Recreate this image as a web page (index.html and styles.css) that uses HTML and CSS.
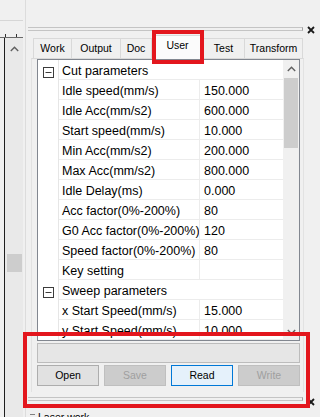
FILE: index.html
```html
<!DOCTYPE html>
<html>
<head>
<meta charset="utf-8">
<link rel="stylesheet" href="styles.css">
</head>
<body>
<div class="screen">
  <div class="left">
    <div class="ruler"><span class="tick"></span><span class="tick"></span></div>
    <div class="lbody">
      <div class="lscroll">
        <svg class="arr" width="9" height="6" viewBox="0 0 9 6"><polyline points="0.8,5 4.5,1.3 8.2,5" fill="none" stroke="#606060" stroke-width="1.4"/></svg>
        <div class="lthumb"></div>
      </div>
    </div>
  </div>
  <div class="split"></div>
  <div class="right">
    <div class="titlebar">
      <div class="grip"></div>
      <svg class="close" width="8" height="8" viewBox="0 0 8 8"><path d="M1 1L7 7M7 1L1 7" stroke="#1a1a1a" stroke-width="1.8"/></svg>
    </div>
    <div class="tabs">
      <div class="tab first w-work">Work</div>
      <div class="tab w-output">Output</div>
      <div class="tab w-doc">Doc</div>
      <div class="tab sel w-user">User</div>
      <div class="tab w-test">Test</div>
      <div class="tab w-transform">Transform</div>
    </div>
    <div class="page">
      <div class="grid">
        <div class="rows">
          <div class="row cat"><span class="gut"><svg width="11" height="11" viewBox="0 0 11 11"><rect x="0.5" y="0.5" width="10" height="10" fill="#fff" stroke="#3c3c3c"/><line x1="2.5" y1="5.5" x2="8.5" y2="5.5" stroke="#3c3c3c"/></svg></span><span class="cname">Cut parameters</span></div>
          <div class="row"><span class="gut"></span><span class="name">Idle speed(mm/s)</span><span class="val">150.000</span></div>
          <div class="row"><span class="gut"></span><span class="name">Idle Acc(mm/s2)</span><span class="val">600.000</span></div>
          <div class="row"><span class="gut"></span><span class="name">Start speed(mm/s)</span><span class="val">10.000</span></div>
          <div class="row"><span class="gut"></span><span class="name">Min Acc(mm/s2)</span><span class="val">200.000</span></div>
          <div class="row"><span class="gut"></span><span class="name">Max Acc(mm/s2)</span><span class="val">800.000</span></div>
          <div class="row"><span class="gut"></span><span class="name">Idle Delay(ms)</span><span class="val">0.000</span></div>
          <div class="row"><span class="gut"></span><span class="name">Acc factor(0%-200%)</span><span class="val">80</span></div>
          <div class="row"><span class="gut"></span><span class="name">G0 Acc factor(0%-200%)</span><span class="val">120</span></div>
          <div class="row"><span class="gut"></span><span class="name">Speed factor(0%-200%)</span><span class="val">80</span></div>
          <div class="row"><span class="gut"></span><span class="name">Key setting</span><span class="val"></span></div>
          <div class="row cat"><span class="gut"><svg width="11" height="11" viewBox="0 0 11 11"><rect x="0.5" y="0.5" width="10" height="10" fill="#fff" stroke="#3c3c3c"/><line x1="2.5" y1="5.5" x2="8.5" y2="5.5" stroke="#3c3c3c"/></svg></span><span class="cname">Sweep parameters</span></div>
          <div class="row"><span class="gut"></span><span class="name">x Start Speed(mm/s)</span><span class="val">15.000</span></div>
          <div class="row"><span class="gut"></span><span class="name">y Start Speed(mm/s)</span><span class="val">10.000</span></div>
        </div>
        <div class="vscroll">
          <div class="sbtn"><svg width="9" height="6" viewBox="0 0 9 6"><polyline points="0.8,5 4.5,1.3 8.2,5" fill="none" stroke="#606060" stroke-width="1.4"/></svg></div>
          <div class="thumb"></div>
          <div class="track"></div>
          <div class="sbtn"><svg width="9" height="6" viewBox="0 0 9 6"><polyline points="0.8,1 4.5,4.7 8.2,1" fill="none" stroke="#606060" stroke-width="1.4"/></svg></div>
        </div>
      </div>
      <div class="progress"></div>
      <div class="buttons">
        <div class="btn">Open</div>
        <div class="btn dis">Save</div>
        <div class="btn focus">Read</div>
        <div class="btn dis">Write</div>
      </div>
    </div>
    <div class="titlebar2">
      <div class="grip"></div>
      <svg class="close close2" width="8" height="8" viewBox="0 0 8 8"><path d="M1 1L7 7M7 1L1 7" stroke="#1a1a1a" stroke-width="1.8"/></svg>
    </div>
    <div class="laser"><span class="dash"></span>Laser work</div>
  </div>
  <div class="hl hl-tab"></div>
  <div class="hl hl-bottom"></div>
</div>
</body>
</html>
```
FILE: styles.css
```css
* { box-sizing: border-box; margin: 0; padding: 0; }
body {
  margin: 0;
  background: #f0f0f0;
  font-family: "Liberation Sans", Arial, sans-serif;
  color: #000;
  width: 320px;
  height: 417px;
  overflow: hidden;
}
.screen {
  position: relative;
  display: flex;
  width: 320px;
  height: 417px;
  overflow: hidden;
}

/* left strip */
.left {
  width: 23px;
  display: flex;
  flex-direction: column;
  padding-top: 20px;
  flex-shrink: 0;
}
.ruler {
  height: 18px;
  flex-shrink: 0;
  border-top: 1px solid #d6d6d6;
  border-bottom: 1px solid #6a6a6a;
  display: flex;
  align-items: flex-end;
  padding-left: 5px;
  gap: 10px;
}
.tick { width: 1px; height: 3px; background: #333; }
.lbody {
  flex: 1;
  margin-left: 4px;
  border-left: 1px solid #1e1e1e;
  display: flex;
  background: #f7f7f7;
}
.lscroll {
  width: 18px;
  background: #e9e9e9;
  display: flex;
  flex-direction: column;
  align-items: center;
  padding-top: 8px;
}
.lthumb {
  width: 15px;
  height: 18px;
  background: #cdcdcd;
  margin-top: 202px;
}
.split { width: 2px; flex-shrink: 0; background: #f0f0f0; }

/* right pane */
.right {
  width: 295px;
  height: 417px;
  overflow: hidden;
  border-left: 1px solid #dcdcdc;
  display: flex;
  flex-direction: column;
  flex-shrink: 0;
}
.titlebar {
  margin-top: 24px;
  height: 10px;
  flex-shrink: 0;
  display: flex;
  align-items: center;
}
.grip {
  margin-left: 2px;
  width: 275px;
  height: 4px;
  border-top: 1px solid #c4c4c4;
  border-bottom: 1px solid #c4c4c4;
  border-right: 1px solid #a0a0a0;
}
.close { margin-left: 4px; margin-top: 2px; }
.close2 { margin-top: 5px; }

.tabs {
  height: 24px;
  flex-shrink: 0;
  display: flex;
  align-items: flex-start;
  padding-left: 7px;
  font-size: 10.5px;
}
.tab {
  margin-top: 4px;
  height: 20px;
  line-height: 19px;
  text-align: center;
  background: #f0f0f0;
  border-top: 1px solid #d9d9d9;
  border-right: 1px solid #d9d9d9;
}
.tab.first { border-left: 1px solid #d9d9d9; }
.tab.sel {
  margin-top: 1px;
  height: 24px;
  line-height: 18px;
  background: #fbfbfb;
  border-left: 1px solid #d9d9d9;
  position: relative;
  z-index: 1;
}
.w-work { width: 39px; }
.w-output { width: 49px; }
.w-doc { width: 31px; }
.w-user { width: 51px; }
.w-test { width: 42px; }
.w-transform { width: 58px; }

.page {
  margin-left: 5px;
  width: 273px;
  height: 334px;
  flex-shrink: 0;
  border-top: 1px solid #d9d9d9;
  border-left: 1px solid #e2e2e2;
  border-right: 1px solid #e2e2e2;
  padding: 0 3px 0 5px;
}
.grid {
  display: flex;
  width: 263px;
  height: 282px;
  border: 1px solid #828790;
  background: #fff;
  font-size: 12.5px;
}
.rows {
  width: 245px;
  display: flex;
  flex-direction: column;
  overflow: hidden;
}
.row {
  display: flex;
  height: 20px;
  flex-shrink: 0;
}
.gut {
  width: 21px;
  flex-shrink: 0;
  border-right: 1px solid #e6e6e6;
  display: flex;
  justify-content: center;
  align-items: flex-start;
  padding-top: 7px;
}
.name, .val, .cname {
  border-bottom: 1px solid #ececec;
  line-height: 18px;
  padding-top: 2px;
  white-space: nowrap;
  overflow: hidden;
}
.name {
  width: 141px;
  flex-shrink: 0;
  padding-left: 3px;
  border-right: 1px solid #ececec;
}
.val { width: 83px; padding-left: 4px; }
.cname { flex: 1; padding-left: 3px; }

.vscroll {
  width: 16px;
  background: #f0f0f0;
  display: flex;
  flex-direction: column;
}
.sbtn {
  height: 17px;
  display: flex;
  align-items: center;
  justify-content: center;
}
.thumb {
  height: 70px;
  margin: 1px 1px 0 1px;
  background: #cdcdcd;
}
.track { flex: 1; }

.progress {
  margin-top: 2px;
  width: 263px;
  height: 20px;
  border: 1px solid #bcbcbc;
  background: #e6e6e6;
}
.buttons {
  margin-top: 2px;
  display: grid;
  grid-template-columns: repeat(4, 1fr);
  gap: 5px;
  width: 263px;
  font-size: 10.5px;
}
.btn {
  height: 21px;
  line-height: 19px;
  text-align: center;
  background: #e1e1e1;
  border: 1px solid #adadad;
}
.btn.dis {
  background: #cccccc;
  border-color: #bfbfbf;
  color: #9f9f9f;
}
.btn.focus {
  background: #e5f1fb;
  border-color: #0078d7;
}

.titlebar2 {
  margin-top: 2px;
  height: 10px;
  flex-shrink: 0;
  display: flex;
  align-items: center;
}
.laser {
  margin-top: 7px;
  flex-shrink: 0;
  padding-left: 4px;
  font-size: 10.5px;
  line-height: 12px;
  display: flex;
  align-items: flex-start;
  white-space: nowrap;
}
.dash {
  width: 5px;
  height: 1px;
  background: #808080;
  margin-right: 3px;
  margin-top: 3px;
}

/* annotation highlights */
.hl {
  position: absolute;
  border: 4px solid #e3161d;
  z-index: 5;
}
.hl-tab { left: 152px; top: 30px; width: 52px; height: 34px; }
.hl-bottom { left: 23px; top: 332px; width: 287px; height: 76px; }
```
